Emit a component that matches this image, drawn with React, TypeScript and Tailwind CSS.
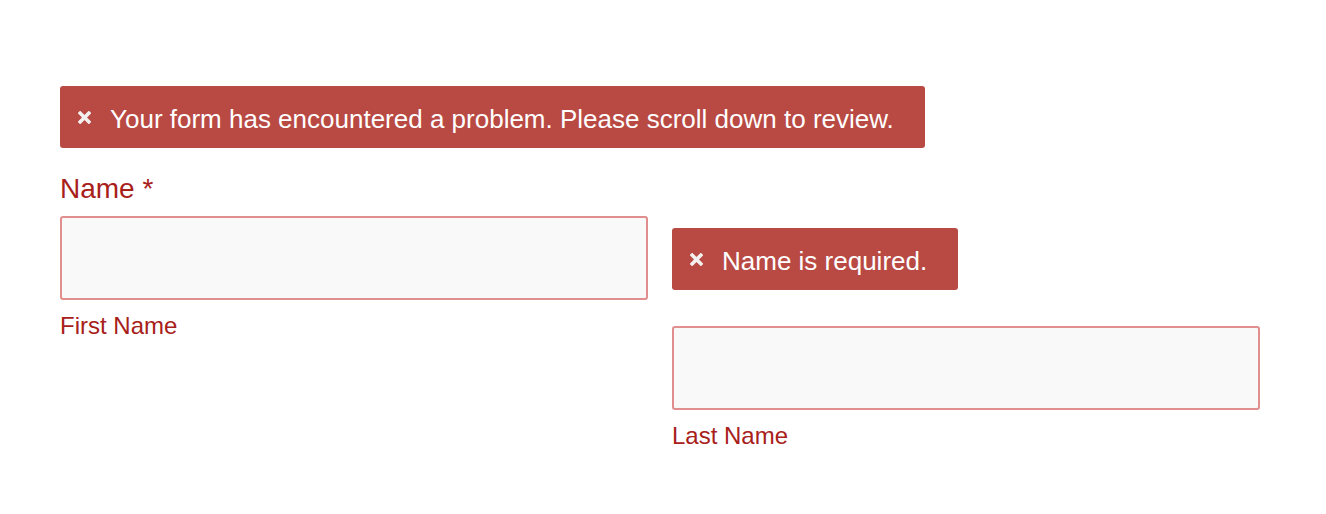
function ErrorIcon() {
  return (
    <svg width="13" height="13" viewBox="0 0 13 13" className="shrink-0">
      <path
        d="M2.2 2.2 L10.8 10.8 M10.8 2.2 L2.2 10.8"
        stroke="#f4f0ef"
        strokeWidth="3.6"
        strokeLinecap="square"
      />
    </svg>
  );
}

function ErrorBanner({ text }: { text: string }) {
  return (
    <div className="inline-flex h-[62px] items-center gap-[19px] rounded-[3px] bg-[#b94943] pl-[18px] pr-[31px] text-[26px] leading-none text-white">
      <ErrorIcon />
      <span className="pt-[4px]">{text}</span>
    </div>
  );
}

export default function App() {
  return (
    <div className="min-h-[514px] bg-white px-[60px] pt-[86px] font-['Liberation_Sans',Arial,sans-serif]">
      <ErrorBanner text="Your form has encountered a problem. Please scroll down to review." />

      <div className="mt-[24px] text-[28px] leading-[34px] text-[#a8201a]">
        Name *
      </div>

      <div className="mt-[10px] grid w-[1200px] grid-cols-2 gap-x-[24px]">
        <div>
          <input
            type="text"
            className="block h-[84px] w-full rounded-[3px] border-2 border-[#e08e8e] bg-[#f9f9f9] outline-none"
          />
          <div className="mt-[12px] text-[24px] leading-[28px] text-[#a8201a]">
            First Name
          </div>
        </div>

        <div className="pt-[12px]">
          <ErrorBanner text="Name is required." />
          <input
            type="text"
            className="mt-[36px] block h-[84px] w-full rounded-[3px] border-2 border-[#e08e8e] bg-[#f9f9f9] outline-none"
          />
          <div className="mt-[12px] text-[24px] leading-[28px] text-[#a8201a]">
            Last Name
          </div>
        </div>
      </div>
    </div>
  );
}
